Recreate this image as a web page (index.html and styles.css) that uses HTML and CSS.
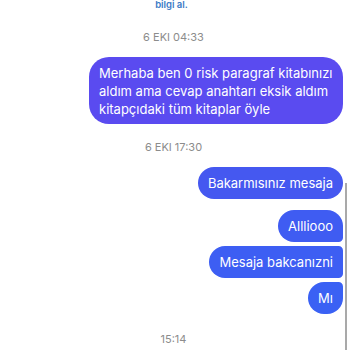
FILE: index.html
```html
<!DOCTYPE html>
<html lang="tr">
<head>
    <meta charset="UTF-8">
    <meta name="viewport" content="width=device-width, initial-scale=1.0">
    <title>Mesajlar</title>
    <link rel="stylesheet" href="styles.css">
</head>
<body>
    <div class="thread">
        <div class="link-tail">bilgi al.</div>

        <div class="stamp stamp-first">6 EKI 04:33</div>
        <div class="bubble bubble-purple">Merhaba ben 0 risk paragraf kitabınızı aldım ama cevap anahtarı eksik aldım kitapçıdaki tüm kitaplar öyle</div>

        <div class="stamp">6 EKI 17:30</div>
        <div class="bubble single b1">Bakarmısınız mesaja</div>

        <div class="group">
            <div class="bubble first b2">Allliooo</div>
            <div class="bubble middle b3">Mesaja bakcanızni</div>
            <div class="bubble last b4">Mı</div>
        </div>

        <div class="stamp stamp-last">15:14</div>
    </div>

    <div class="scrollbar"></div>
</body>
</html>
```

FILE: styles.css
```css
* {
    margin: 0;
    padding: 0;
    box-sizing: border-box;
}

body {
    font-family: Inter, "Noto Sans", sans-serif;
    background: #ffffff;
    color: #000000;
    width: 350px;
    height: 350px;
    overflow: hidden;
    position: relative;
}

.thread {
    display: flex;
    flex-direction: column;
    align-items: flex-end;
    padding-right: 7px;
}

.link-tail {
    align-self: center;
    margin-top: -2px;
    font-size: 9.5px;
    line-height: 13px;
    font-weight: 600;
    color: #3b7bc6;
}

.stamp {
    align-self: center;
    margin-top: 16px;
    font-size: 11px;
    line-height: 14px;
    color: #8c8c8c;
    padding-left: 4px;
}

.stamp-first {
    margin-top: 19px;
}

.stamp-last {
    margin-top: 18px;
}

.bubble {
    margin-top: 13px;
    padding: 7px 10px;
    font-size: 13px;
    line-height: 18px;
    color: #ffffff;
    border-radius: 18px;
}

.bubble-purple {
    width: 254px;
    padding: 6.5px 8px 6.5px 10px;
    border-radius: 20px;
    background: #5a4bf0;
}

.b1 { background: #4558f0; }
.b2 { background: #3f5cf2; }
.b3 { background: #3d5ef3; }
.b4 { background: #3a61f4; }

.group {
    display: flex;
    flex-direction: column;
    align-items: flex-end;
    gap: 4px;
    margin-top: 11px;
}

.group .bubble {
    margin-top: 0;
}

.bubble.first {
    border-bottom-right-radius: 5px;
}

.bubble.middle {
    border-top-right-radius: 5px;
    border-bottom-right-radius: 5px;
}

.bubble.last {
    border-top-right-radius: 5px;
}

.scrollbar {
    position: absolute;
    left: 345px;
    top: 183px;
    width: 2px;
    height: 167px;
    background: #a9a9a9;
}
```
